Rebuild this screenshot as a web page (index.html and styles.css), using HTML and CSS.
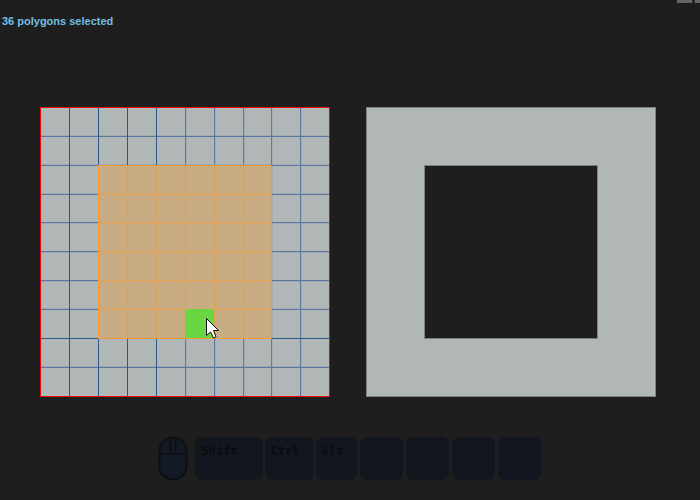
FILE: index.html
```html
<!DOCTYPE html>
<html lang="en">
<head>
<meta charset="utf-8">
<title>Polygon selection</title>
<link rel="stylesheet" href="styles.css">
</head>
<body>
<header class="bar">
  <p class="status">36 polygons selected</p>
  <span class="handle"></span>
</header>
<main class="views">
  <svg class="view" viewBox="0 0 290 290" aria-label="UV grid">
    <rect width="290" height="290" fill="#b1b6b7"/>
    <g shape-rendering="crispEdges">
      <path d="M0 28.5H290M0 57.5H290M0 86.5H290M0 116.5H290M0 145.5H290M0 174.5H290M0 201.5H290M0 259.5H290" stroke="#9ea8b2"/>
      <path d="M146.5 0V290M175.5 0V290M204.5 0V290M232.5 0V290M261.5 0V290" stroke="#a3acb4"/>
      <path d="M0 29.5H290M0 58.5H290M0 87.5H290M0 115.5H290M0 144.5H290M0 173.5H290M0 202.5H290M0 260.5H290" stroke="#5d76a0"/>
      <path d="M29.5 0V290M58.5 0V290M87.5 0V290M116.5 0V290" stroke="#2b598c"/>
      <path d="M145.5 0V290M174.5 0V290M203.5 0V290M231.5 0V290M260.5 0V290" stroke="#5d7aa4"/>
      <path d="M0 231.5H290" stroke="#2b598c"/>
      <rect x="58" y="58" width="174" height="174" fill="#c7ac84"/>
      <path d="M86.5 58V231M117.5 58V231M144.5 58V231M175.5 58V231M202.5 58V231M58 86.5H231M58 116.5H231M58 145.5H231M58 174.5H231M58 201.5H231" stroke="#d2a972"/>
      <path d="M87.5 58V231M116.5 58V231M145.5 58V231M174.5 58V231M203.5 58V231M58 87.5H231M58 115.5H231M58 144.5H231M58 173.5H231M58 202.5H231" stroke="#e2a254"/>
      <rect x="58.5" y="58.5" width="173" height="173" fill="none" stroke="#f39c35"/>
      <rect x="145" y="202" width="29" height="29" fill="#6bd644"/>
      <rect x=".5" y=".5" width="289" height="289" fill="none" stroke="#fb0004"/>
    </g>
    <path d="M166.5 211.5V228.5L170.5 225L173.5 231L176 229.8L173.5 223.5H178.5Z" fill="#fff" stroke="#111"/>
  </svg>
  <svg class="view" viewBox="0 0 290 290" aria-label="Mesh preview">
    <path d="M.5 .5H289.5V289.5H.5ZM58.5 58.5V231.5H231.5V58.5Z" fill="#b1b6b7" stroke="#7c8081" fill-rule="evenodd"/>
  </svg>
</main>
<footer class="keys">
  <svg class="mouse" viewBox="0 0 30 45" aria-label="Mouse">
    <rect x="1.5" y="1.5" width="27" height="42" rx="13.5" fill="#141a25" stroke="#0c0f15" stroke-width="2"/>
    <path d="M2 18H28M12.5 2V18M17.5 2V18" fill="none" stroke="#0c0f15" stroke-width="2"/>
  </svg>
  <kbd class="key shift">Shift</kbd>
  <kbd class="key ctrl">Ctrl</kbd>
  <kbd class="key alt">Alt</kbd>
  <div class="blanks">
    <kbd class="key"></kbd>
    <kbd class="key"></kbd>
    <kbd class="key"></kbd>
    <kbd class="key"></kbd>
  </div>
</footer>
</body>
</html>
```
FILE: styles.css
```css
body {
  margin: 0;
  background: #1e1e1e;
}
.bar {
  display: flex;
  justify-content: space-between;
  align-items: flex-start;
}
.status {
  margin: 0;
  padding: 14px 2px;
  font: bold 11px/14px "Liberation Sans", Arial, sans-serif;
  color: #72bfe3;
}
.handle {
  width: 23px;
  height: 3px;
  background: linear-gradient(90deg, transparent 15px, #333 15px, #333 16px, #111 16px, #111 17px, #333 17px, #333 18px, transparent 18px), #666;
}
.views {
  display: flex;
  gap: 36px;
  padding: 65px 44px 40px 40px;
}
.view {
  display: block;
  flex: 1;
  min-width: 0;
}
.keys {
  display: flex;
  justify-content: center;
  gap: 2px;
  padding-right: 2px;
}
.mouse {
  width: 30px;
  height: 45px;
  margin: -1px 5px -1px 0;
}
.key {
  box-sizing: border-box;
  width: 43px;
  height: 43px;
  padding: 7px 6px;
  border-radius: 7px;
  background: #12161e;
  color: #0a0c10;
  font: bold 12px/14px "DejaVu Sans Mono", monospace;
}
.shift {
  width: 68px;
  padding-left: 7px;
}
.ctrl {
  width: 49px;
}
.alt {
  width: 41px;
}
.blanks {
  display: flex;
  gap: 3px;
  margin-left: 1px;
}
```
